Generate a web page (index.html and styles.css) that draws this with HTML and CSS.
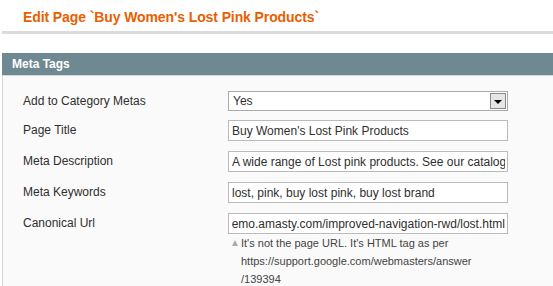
FILE: index.html
```html
<!DOCTYPE html>
<html lang="en">
<head>
<meta charset="UTF-8">
<title>Edit Page</title>
<link rel="stylesheet" href="styles.css">
</head>
<body>
  <div class="content-header">
    <h3 class="head-title">Edit Page `Buy Women's Lost Pink Products`</h3>
  </div>

  <div class="entry-edit">
    <div class="entry-head">Meta Tags</div>
    <div class="fieldset">
      <div class="row row-select">
        <label class="label">Add to Category Metas</label>
        <div class="value">
          <div class="select">
            <span class="select-text">Yes</span>
            <span class="select-btn"><span class="arrow"></span></span>
          </div>
        </div>
      </div>
      <div class="row">
        <label class="label">Page Title</label>
        <div class="value"><input class="input-text" type="text" value="Buy Women's Lost Pink Products"></div>
      </div>
      <div class="row">
        <label class="label">Meta Description</label>
        <div class="value"><input class="input-text" type="text" value="A wide range of Lost pink products. See our catalog for more."></div>
      </div>
      <div class="row">
        <label class="label">Meta Keywords</label>
        <div class="value"><input class="input-text" type="text" value="lost, pink, buy lost pink, buy lost brand"></div>
      </div>
      <div class="row row-last">
        <label class="label">Canonical Url</label>
        <div class="value">
          <input class="input-text" id="canonical" type="text" value="http://demo.amasty.com/improved-navigation-rwd/lost.html">
          <p class="note"><span class="note-arrow"></span>It's not the page URL. It's HTML tag as per https://support.google.com/webmasters/answer<wbr>/139394</p>
        </div>
      </div>
    </div>
  </div>

<script src="script.js"></script>
</body>
</html>
```

FILE: styles.css
```css
body { margin: 0; background: #fff; font-family: Arial, "Liberation Sans", sans-serif; font-size: 12px; color: #2f2f2f; }

.content-header { margin-left: 2px; height: 31px; border-bottom: 3px solid #dcdcdc; }
.head-title { margin: 0; padding: 8px 0 0 21px; font-size: 14px; font-weight: bold; color: #eb5e00; line-height: 18px; letter-spacing: -0.1px; }

.entry-edit { margin: 19px 0 0 2px; }
.entry-head { height: 22px; line-height: 22px; padding-left: 10px; background: #6f8992; color: #fff; font-weight: bold; font-size: 12px; }
.fieldset { background: #fafafa; border-left: 1px solid #d6d6d6; border-top: 1px solid #d6d6d6; padding: 15px 0 10px 20px; }

.row { display: flex; align-items: flex-start; margin-bottom: 10px; }
.row-select { margin-bottom: 9px; }
.row-last { margin-bottom: 0; }
.label { width: 205px; line-height: 21px; color: #2f2f2f; }
.row-select .label { line-height: 20px; }
.value { width: 280px; }

.input-text { box-sizing: border-box; width: 280px; height: 21px; margin: 0; padding: 0 2px 0 3px; border: 1px solid #bbb; background: #fff; font-family: Arial, "Liberation Sans", sans-serif; font-size: 12px; color: #2f2f2f; }

.select { box-sizing: border-box; display: flex; align-items: center; width: 280px; height: 20px; border: 1px solid #aaa; background: #fff; }
.select-text { flex: 1; padding-left: 4px; }
.select-btn { box-sizing: border-box; display: flex; align-items: center; justify-content: center; width: 16px; height: 16px; margin-right: 1px; border: 1px solid #8a8a8a; background: #e6e6e6; }
.arrow { width: 0; height: 0; border-left: 4px solid transparent; border-right: 4px solid transparent; border-top: 4px solid #000; margin-top: 1px; }

.note { position: relative; margin: 0; padding-left: 13px; font-size: 11px; line-height: 18px; color: #444; }
.note-arrow { position: absolute; left: 4px; top: 6px; width: 0; height: 0; border-left: 3px solid transparent; border-right: 3px solid transparent; border-bottom: 6px solid #aaa; }
```

FILE: script.js
```js
// show the end of the canonical url, like after typing it
var url = document.getElementById('canonical');
url.scrollLeft = url.scrollWidth;
```
